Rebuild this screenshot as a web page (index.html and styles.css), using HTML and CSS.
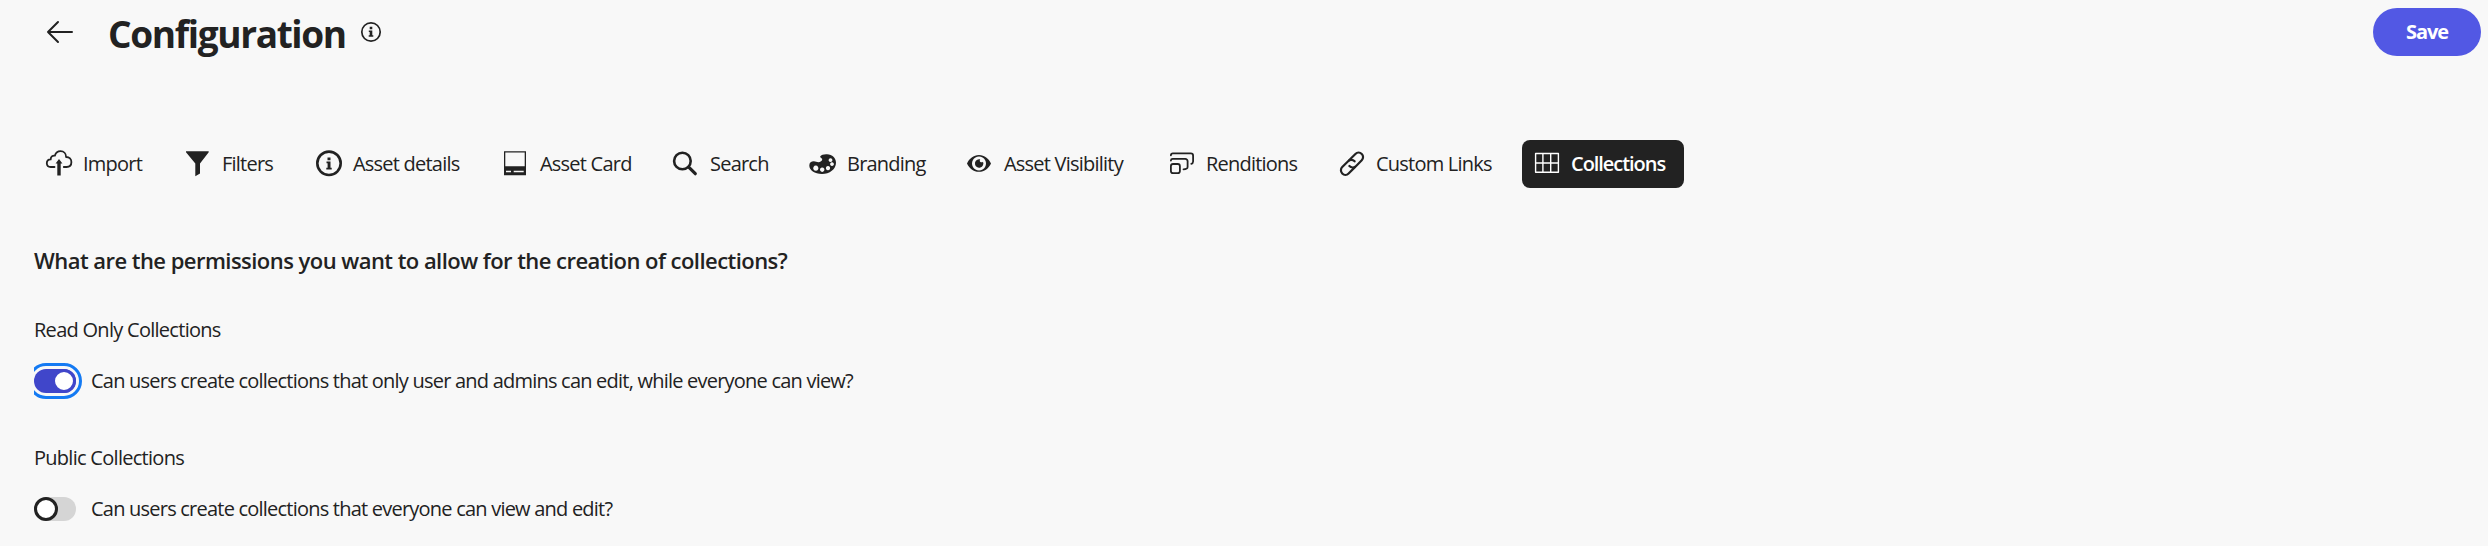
FILE: index.html
```html
<!DOCTYPE html>
<html lang="en">
<head>
<meta charset="utf-8">
<title>Configuration</title>
<link rel="stylesheet" href="styles.css">
</head>
<body>
<header class="header">
  <svg class="back" viewBox="0 0 28 24"><path d="M26 12H2M12 2 2 12l10 10"/></svg>
  <h1 class="title">Configuration</h1>
  <svg class="info" viewBox="0 0 22 22"><circle cx="11" cy="11" r="9.2"/><path class="solid" d="M9.7 5.8h2.6v2.4H9.7zM8.8 9.4h3.500v4.800h1v1.500H8.700v-1.500h1v-3.300h-.9z"/></svg>
  <button class="save">Save</button>
</header>

<nav class="tabs">
  <a class="tab"><svg class="icon line" viewBox="0 0 28 28"><path d="M9.500 17H5.700A4 4 0 0 1 1.800 13.200C1.800 11 3.400 9.400 5.700 9.400 5.700 6.800 7.400 5.300 9.900 5.600 10.800 2.800 12.800 1.200 15.500 1.200c3.300 0 5.600 2.400 5.600 5.800C24.400 7 26.400 9.200 26.400 12c0 3-2 5-4.800 5h-2.800"/><path class="solid" d="M14 9l3.400 4.400h-1.700V25.500h-3.400V13.400h-1.700z"/></svg><span class="label">Import</span></a>
  <a class="tab"><svg class="icon" viewBox="0 0 28 28"><path d="M2 1.300h22.700v1L16 13.400v10L11.300 26.300V13.400L2 2.300z"/></svg><span class="label">Filters</span></a>
  <a class="tab"><svg class="icon line" viewBox="0 0 28 28"><circle cx="14" cy="13.300" r="11.700" stroke-width="2.600"/><path class="solid" d="M12.500 7.500h3v2.700h-3zM11.500 11.500h4v6.200h1.200v1.700h-5.400v-1.700h1.300v-4.500h-1.100z"/></svg><span class="label">Asset details</span></a>
  <a class="tab"><svg class="icon" viewBox="0 0 28 28"><path fill-rule="evenodd" d="M2 1.300h22v24H2zM3.300 2.600V16.300H22.700V2.600zM4 20.700h5v1.600H4zM11.700 20.700h10v1.600h-10z"/></svg><span class="label">Asset Card</span></a>
  <a class="tab"><svg class="icon line" viewBox="0 0 28 28"><circle cx="10.400" cy="11" r="8.300" stroke-width="2.600"/><path d="m16.700 17.200 6.600 6.500" stroke-width="3.200"/></svg><span class="label">Search</span></a>
  <a class="tab"><svg class="icon" viewBox="0 0 28 28"><path fill-rule="evenodd" d="M11.200 6.500C12.200 4.800 15 4 18 4.200c5.300.2 9 3.800 9 8.500 0 6.500-6.500 11.300-14 11.300C5.500 24 .3 20.200.3 15.500.3 12.500 2.300 11.300 4.800 11.300c1.800 0 3 .9 4.600.9 1.900 0 3.800-1.300 3.800-2.900 0-1.400-2.500-1.500-2-2.800zM6.800 15.600a2.600 2.600 0 1 0 .01 0zM13.200 17.500a2.200 2.200 0 1 0 .01 0zM19 16a2.100 2.100 0 1 0 .01 0zM23 12.200a1.900 1.900 0 1 0 .01 0zM21.500 8.200a1.900 1.900 0 1 0 .01 0z"/></svg><span class="label">Branding</span></a>
  <a class="tab"><svg class="icon" viewBox="0 0 28 28"><path fill-rule="evenodd" d="M1 13.500C3.200 8.600 7.500 5 13 5s9.800 3.600 12 8.500c-2.200 4.900-6.500 8.300-12 8.300S3.200 18.400 1 13.500zM13 6.500a7 7 0 1 0 .01 0zM13 9.300c.5 0 .9.100 1.200.2-.8.900-.5 2.600 1.100 2.800.7.100 1.300-.1 1.700-.5A4.200 4.200 0 1 1 13 9.300z"/></svg><span class="label">Asset Visibility</span></a>
  <a class="tab"><svg class="icon line" viewBox="0 0 28 28"><rect x="2.900" y="14" width="9" height="9.200" rx="2.200"/><path d="M2.900 10.500Q3 8.900 4.700 8.900H17.300A2.300 2.300 0 0 1 19.600 11.200V17Q19.500 19.300 15.500 19.300M2.900 5.300Q3 3.400 4.900 3.400H22.800A2.300 2.300 0 0 1 25.100 5.700V11.500Q25 13.500 23.300 13.800"/></svg><span class="label">Renditions</span></a>
  <a class="tab"><svg class="icon line" viewBox="0 0 28 28"><g transform="translate(14 13.700) rotate(-45)" stroke-width="2.200"><path d="M0-4.500H9.300A4.500 4.500 0 0 1 9.300 4.500H1A4.500 4.500 0 0 1-3.500-.2"/><path d="M0 4.500H-9.300A4.500 4.500 0 0 1-9.300-4.500H-1A4.500 4.500 0 0 1 3.500 .2"/></g></svg><span class="label">Custom Links</span></a>
  <a class="tab active"><svg class="icon line" viewBox="0 0 28 28"><path stroke-width="1.400" d="M2.600 3.500H25.400V22.300H2.600zM9.900 3.500V22.300M17.700 3.500V22.300M2.600 13H25.400"/></svg><span class="label">Collections</span></a>
</nav>

<main class="content">
  <h2 class="question">What are the permissions you want to allow for the creation of collections?</h2>
  <section class="group">
    <h3 class="name">Read Only Collections</h3>
    <label class="option"><span class="switch on focus"><span class="knob"></span></span><span class="text">Can users create collections that only user and admins can edit, while everyone can view?</span></label>
  </section>
  <section class="group">
    <h3 class="name">Public Collections</h3>
    <label class="option"><span class="switch"><span class="knob"></span></span><span class="text">Can users create collections that everyone can view and edit?</span></label>
  </section>
</main>
</body>
</html>
```

FILE: styles.css
```css
* { box-sizing: border-box; }
body {
  margin: 0;
  height: 546px;
  overflow: hidden;
  background: #f8f8f8;
  color: #222;
  font: 20px/28px "Open Sans", "Noto Sans", sans-serif;
  letter-spacing: -0.78px;
  white-space: nowrap;
}
h1, h2, h3 { margin: 0; }
.header {
  display: flex;
  align-items: center;
  height: 64px;
  padding: 0 7px 0 46px;
}
.back {
  width: 28px;
  height: 24px;
  fill: none;
  stroke: #222;
  stroke-width: 2;
  stroke-linecap: round;
  stroke-linejoin: round;
}
.title {
  width: 252px;
  margin-left: 34px;
  padding-top: 3px;
  font-size: 37px;
  line-height: 56px;
  font-weight: 700;
  letter-spacing: -1.35px;
}
.info {
  width: 22px;
  height: 22px;
  fill: none;
  stroke: #222;
  stroke-width: 1.7;
}
.solid { fill: currentColor; stroke: none; }
.save {
  width: 108px;
  height: 48px;
  margin-left: auto;
  padding: 0 0 1px;
  border: 0;
  border-radius: 24px;
  background: #5258e4;
  color: #fff;
  font: inherit;
  font-weight: 700;
  letter-spacing: -1.1px;
}
.tabs {
  display: grid;
  grid-template-columns: 139px 131px 187px 170px 137px 157px 202px 170px 195px 162px;
  margin-top: 76px;
  padding-left: 34px;
}
.tab {
  display: flex;
  align-items: center;
  gap: 10px;
  height: 48px;
  padding-left: 11px;
}
.icon {
  flex: none;
  width: 28px;
  height: 28px;
  fill: currentColor;
}
.line {
  fill: none;
  stroke: currentColor;
  stroke-width: 1.8;
  stroke-linecap: round;
  stroke-linejoin: round;
}
.active {
  border-radius: 8px;
  background: #222;
  color: #fff;
  font-weight: 600;
  letter-spacing: -1.05px;
}
.content { padding: 56px 0 0 34px; }
.question {
  font-size: 22px;
  line-height: 32px;
  font-weight: 600;
  letter-spacing: -0.54px;
}
.group { margin-top: 40px; }
.group + .group { margin-top: 45px; }
.name {
  font-size: 20px;
  line-height: 28px;
  font-weight: 400;
  letter-spacing: -0.72px;
}
.option {
  display: flex;
  align-items: center;
  gap: 15px;
  height: 36px;
  margin-top: 19px;
}
.switch {
  display: flex;
  width: 42px;
  height: 24px;
  border-radius: 12px;
  background: #d5d5d5;
}
.knob {
  width: 24px;
  height: 24px;
  border: 3px solid #222;
  border-radius: 50%;
  background: #fff;
}
.on {
  justify-content: flex-end;
  background: #4046ca;
}
.on .knob { border-color: #4046ca; }
.focus {
  outline: 3px solid #147af3;
  outline-offset: 3px;
  clip-path: inset(-6px -6px -6px 0);
}
```
